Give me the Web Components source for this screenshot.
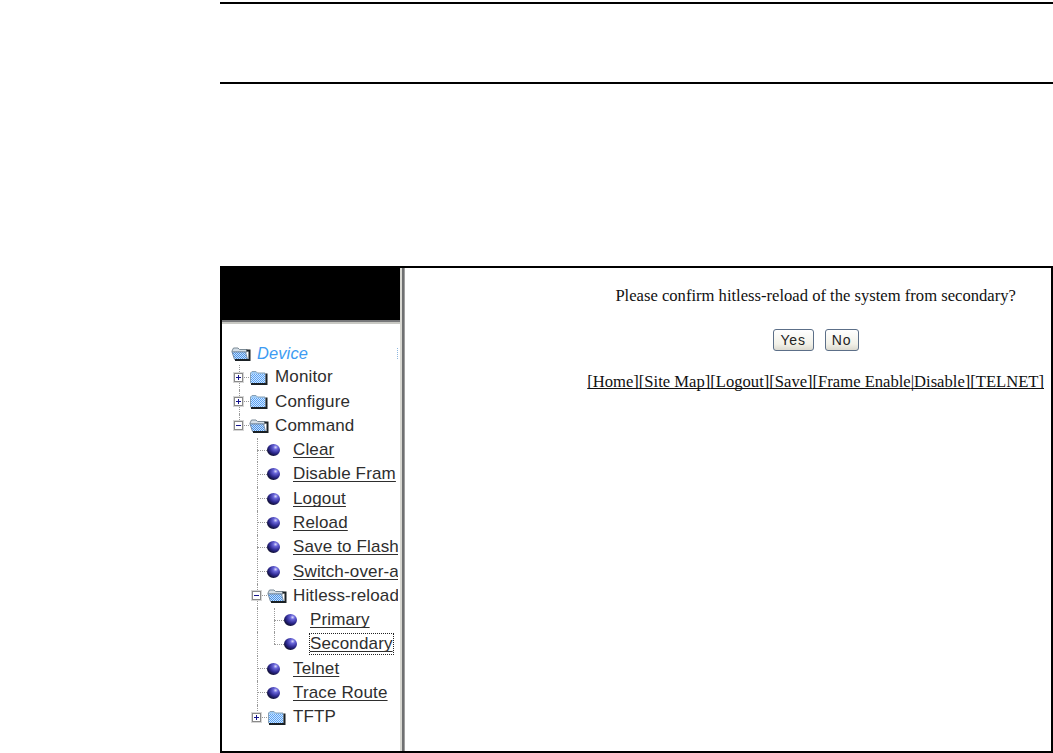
<!DOCTYPE html>
<html>
<head>
<meta charset="utf-8">
<title>Hitless reload</title>
<style>
  html, body { margin: 0; padding: 0; background: #fff; }
</style>
</head>
<body>
<manual-page>
  <device-frame>
    <device-tree slot="tree"></device-tree>
    <confirm-panel slot="main"></confirm-panel>
  </device-frame>
</manual-page>

<script>
// folder and ball icons, all drawn inline
const ICONS = {
  closed: `<svg width="19" height="15" viewBox="0 0 19 15">
    <defs><pattern id="d" width="2" height="2" patternUnits="userSpaceOnUse"><rect width="2" height="2" fill="#5aa2f4"/><rect width="1" height="1" fill="#cfe6ff"/><rect x="1" y="1" width="1" height="1" fill="#cfe6ff"/></pattern></defs>
    <path d="M1.5 3 L3 1.5 H7 L8.5 3 H16 V13 H1.5 Z" fill="#9fcbf5" stroke="#87a0b5" stroke-width="1"/>
    <rect x="2" y="4" width="14" height="9" fill="url(#d)"/>
    <path d="M17.5 3.5 V14 H2" fill="none" stroke="#1a2024" stroke-width="2"/>
  </svg>`,
  open: `<svg width="20" height="15" viewBox="0 0 20 15">
    <defs><pattern id="o" width="2" height="2" patternUnits="userSpaceOnUse"><rect width="2" height="2" fill="#4a90e6"/><rect width="1" height="1" fill="#c6e0fa"/><rect x="1" y="1" width="1" height="1" fill="#c6e0fa"/></pattern></defs>
    <path d="M1 5 L2.5 2 H7 L8.5 3.5 H16 V6 H1 Z" fill="#d5dfe8" stroke="#7a8994" stroke-width="1"/>
    <path d="M1 6 H14.5 L16.5 13.5 H3.5 Z" fill="url(#o)" stroke="#7a90a8" stroke-width="1"/>
    <path d="M15.5 4.5 H18.5 V14 H4" fill="none" stroke="#1a2024" stroke-width="2"/>
  </svg>`,
  ball: `<svg width="14" height="14" viewBox="0 0 14 14">
    <defs><radialGradient id="b" cx="0.66" cy="0.28" r="0.8"><stop offset="0" stop-color="#dcdcfb"/><stop offset="0.22" stop-color="#6a66da"/><stop offset="0.6" stop-color="#2c288e"/><stop offset="1" stop-color="#06061a"/></radialGradient></defs>
    <ellipse cx="6.5" cy="7" rx="6.5" ry="6.1" fill="url(#b)"/>
  </svg>`
};

// the two horizontal rules and the screenshot under them
class ManualPage extends HTMLElement {
  connectedCallback() {
    this.attachShadow({ mode: 'open' });
    this.shadowRoot.innerHTML = `
      <style>
        :host { display: block; padding: 2px 0 0 220px; }
        hr { border: 0; height: 2px; background: #000; margin: 0; }
        .first { margin-bottom: 78px; }
        .second { margin-bottom: 182px; }
      </style>
      <hr class="first">
      <hr class="second">
      <slot></slot>
    `;
  }
}

class DeviceFrame extends HTMLElement {
  connectedCallback() {
    this.attachShadow({ mode: 'open' });
    this.shadowRoot.innerHTML = `
      <style>
        :host {
          display: grid;
          grid-template-columns: 178px 5px 1fr;
          height: 483px;
          border: 2px solid #000;
          background: #fff;
        }
        .left { display: flex; flex-direction: column; min-width: 0; overflow: hidden; }
        .banner { height: 52px; background: #000; flex: none; }
        .sep { height: 5px; flex: none; background: linear-gradient(#77787a 0 2px, #c9c9c4 2px 4px, #fff 4px); }
        .split { background: linear-gradient(90deg, #d8d8d2 0 2px, #6f7072 2px 4px, #a0a0a0 4px); }
        .main { min-width: 0; }
      </style>
      <div class="left">
        <div class="banner"></div>
        <div class="sep"></div>
        <slot name="tree"></slot>
      </div>
      <div class="split"></div>
      <div class="main"><slot name="main"></slot></div>
    `;
  }
}

const ROWS = [
  { x: 9,  icon: 'open',   text: 'Device', root: true, gap: 6 },
  { x: 12, toggle: '+', icon: 'closed', text: 'Monitor', gap: 7, guides: [[17, 0, 1]] },
  { x: 12, toggle: '+', icon: 'closed', text: 'Configure', gap: 7, guides: [[17, 0, 1]] },
  { x: 12, toggle: '-', icon: 'open',   text: 'Command', gap: 6, guides: [[17, 0, .5]] },
  { x: 35, leaf: true, text: 'Clear', link: true, guides: [[35, 0, 1]] },
  { x: 35, leaf: true, text: 'Disable Fram', link: true, guides: [[35, 0, 1]] },
  { x: 35, leaf: true, text: 'Logout', link: true, guides: [[35, 0, 1]] },
  { x: 35, leaf: true, text: 'Reload', link: true, guides: [[35, 0, 1]] },
  { x: 35, leaf: true, text: 'Save to Flash', link: true, guides: [[35, 0, 1]] },
  { x: 35, leaf: true, text: 'Switch-over-a', link: true, guides: [[35, 0, 1]] },
  { x: 30, toggle: '-', icon: 'open', text: 'Hitless-reload', gap: 6, guides: [[35, 0, 1]] },
  { x: 52, leaf: true, text: 'Primary', link: true, guides: [[35, 0, 1], [52, 0, 1]] },
  { x: 52, leaf: true, text: 'Secondary', link: true, focus: true, guides: [[35, 0, 1], [52, 0, .5]] },
  { x: 35, leaf: true, text: 'Telnet', link: true, guides: [[35, 0, 1]] },
  { x: 35, leaf: true, text: 'Trace Route', link: true, guides: [[35, 0, 1]] },
  { x: 30, toggle: '+', icon: 'closed', text: 'TFTP', gap: 7, guides: [[35, 0, .5]] }
];

class TreeRow extends HTMLElement {
  set data(r) {
    const root = this.shadowRoot || this.attachShadow({ mode: 'open' });
    const guides = (r.guides || []).map(g =>
      `<i class="guide" style="left:${g[0]}px;top:${g[1] * 100}%;height:${g[2] * 100}%"></i>`).join('');
    let lead = '';
    if (r.toggle) {
      lead = `<span class="box">${r.toggle === '+' ? '<u class="v"></u>' : ''}<u class="h"></u></span><b class="hline" style="width:6px"></b>${ICONS[r.icon]}`;
    } else if (r.leaf) {
      lead = `<b class="hline" style="width:10px"></b>${ICONS.ball}`;
    } else {
      lead = ICONS[r.icon];
    }
    root.innerHTML = `
      <style>
        :host { display: block; position: relative; height: 24.27px; }
        .row {
          display: flex; align-items: center; height: 100%;
          white-space: nowrap; padding-left: ${r.x}px;
        }
        svg { flex: none; position: relative; }
        .guide { position: absolute; width: 0; border-left: 1px dotted #9a9a9a; }
        .hline { flex: none; height: 0; border-top: 1px dotted #9a9a9a; }
        .box {
          flex: none; box-sizing: border-box; position: relative; width: 9px; height: 9px;
          border: 1px solid #8a8a8a; background: #fff; box-shadow: 0 0 0 1px #d6d6d6;
        }
        .box u { position: absolute; background: #14148c; }
        .box .h { left: 1px; right: 1px; top: 3px; height: 1px; }
        .box .v { top: 1px; bottom: 1px; left: 3px; width: 1px; }
        .label { color: #2e2e2e; margin-left: ${r.gap || 12}px; line-height: 20px; }
        .root { color: #3d9bf2; font-style: italic; font-size: 16.4px; }
        a { color: #2e2e2e; text-decoration: underline; text-decoration-skip-ink: none; text-underline-offset: 2px; }
        .focus { outline: 1px dotted #222; }
      </style>
      ${guides}
      <div class="row">${lead}<span class="label ${r.root ? 'root' : ''} ${r.focus ? 'focus' : ''}">${r.link ? `<a href="#">${r.text}</a>` : r.text}</span></div>
    `;
  }
}

class DeviceTree extends HTMLElement {
  connectedCallback() {
    this.attachShadow({ mode: 'open' });
    this.shadowRoot.innerHTML = `
      <style>
        :host {
          display: block; position: relative; padding-top: 16px; overflow: hidden; flex: 1;
          margin-right: 2px;
          font: 17px "Liberation Sans", Arial, sans-serif; letter-spacing: .15px;
        }
        .mark { position: absolute; right: 0; top: 23px; height: 11px; border-left: 1px dotted #8fb8e0; }
      </style>
      <div class="mark"></div>
    `;
    for (const r of ROWS) {
      const el = document.createElement('tree-row');
      this.shadowRoot.appendChild(el);
      el.data = r;
    }
  }
}

class ConfirmPanel extends HTMLElement {
  connectedCallback() {
    this.attachShadow({ mode: 'open' });
    this.shadowRoot.innerHTML = `
      <style>
        :host {
          display: flex; justify-content: flex-end; padding: 18px 7px 0 0;
          font: 16.6px "Liberation Serif", "Times New Roman", serif; color: #111;
        }
        .col { display: flex; flex-direction: column; align-items: center; }
        p { margin: 0 0 23px; }
        .buttons { display: flex; gap: 11px; margin-bottom: 21px; }
        button {
          height: 22px; padding: 0; box-sizing: border-box;
          border: 1px solid #5c6f88; border-radius: 3px;
          background: linear-gradient(#fff, #f2f1e8 70%, #dcdad0);
          font: 14px "Liberation Sans", Arial, sans-serif; letter-spacing: .8px; color: #222;
        }
        .yes { width: 41px; }
        .no { width: 34px; }
        .links { white-space: nowrap; }
        a { color: #111; text-decoration-skip-ink: none; }
      </style>
      <div class="col">
        <p>Please confirm hitless-reload of the system from secondary?</p>
        <div class="buttons">
          <button class="yes">Yes</button>
          <button class="no">No</button>
        </div>
        <div class="links"><a href="#">[Home]</a><a href="#">[Site Map]</a><a href="#">[Logout]</a><a href="#">[Save]</a><a href="#">[Frame Enable</a><a href="#">|Disable]</a><a href="#">[TELNET]</a></div>
      </div>
    `;
  }
}

customElements.define('manual-page', ManualPage);
customElements.define('device-frame', DeviceFrame);
customElements.define('tree-row', TreeRow);
customElements.define('device-tree', DeviceTree);
customElements.define('confirm-panel', ConfirmPanel);
</script>
</body>
</html>
